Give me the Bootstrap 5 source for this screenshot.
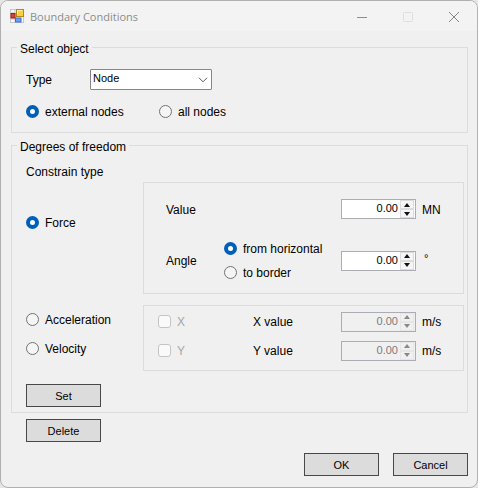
<!DOCTYPE html>
<html lang="en">
<head>
<meta charset="utf-8">
<meta name="viewport" content="width=device-width, initial-scale=1">
<title>Boundary Conditions</title>
<link href="https://cdn.jsdelivr.net/npm/bootstrap@5.3.0/dist/css/bootstrap.min.css" rel="stylesheet">
<style>
body { font-family: "Liberation Sans", Arial, sans-serif; font-size: 12px; line-height: 15px; color: #000; background: #e6e6e6; }
.dialog-window { background: #f0f0f0; border: 1px solid #b0b0b0; border-radius: 8px; overflow: hidden; }
.title-bar { height: 30px; background: #f3f3f3; padding-left: 9px; color: #8c8c8c; font-family: "Open Sans", "Noto Sans", sans-serif; }
.title-bar h1 { font-size: 11px; line-height: 16px; padding-left: 6px; padding-top: 1px; }
.caption-btn { width: 46px; height: 30px; border: 0; background: none; padding: 0; }
.dialog-body { padding: 7px 9px 11px 10px; }
.group-box { border: 1px solid #dcdcdc; padding: 0 3px 5px 14px; margin-bottom: 3px; }
.group-box > legend { font-size: 12px; line-height: 13px; padding: 5px 3px 0 3px; margin-left: -9px; }
.field-label, .unit { padding-top: 2px; }
.type-row { padding-top: 13px; }
.type-row .field-label { width: 64px; }
.type-select { width: 122px; height: 21px; border: 1px solid #868686; border-radius: 1px; font-size: 11px; line-height: 13px; padding: 0 20px 2px 2px; color: #000;
  background: #fff url("data:image/svg+xml,%3Csvg xmlns='http://www.w3.org/2000/svg' viewBox='0 0 10 6'%3E%3Cpath d='M1 .8l4 4 4-4' fill='none' stroke='%23555'/%3E%3C/svg%3E") no-repeat right 3px center / 10px 6px; }
.scope-row { padding: 14px 0 8px; }
.scope-row .choice { width: 133px; }
.choice { display: flex; align-items: center; gap: 6px; min-height: 15px; }
.choice input { flex: none; width: 13px; height: 13px; margin: 0; background: #f5f5f5; border: 1px solid #717171; }
.choice input[type=radio]:checked { border: 4px solid #005fb8; background: #fff; }
.choice label { padding-top: 2px; line-height: 13px; }
.choice input[type=checkbox] { border-color: #c4c4c4; border-radius: 3px; background: #fafafa; opacity: 1; }
.choice input:disabled + label { color: #a6a6a6; opacity: 1; }
.freedom-grid { display: grid; grid-template-columns: 117px 1fr; }
.constrain-title { height: 28px; padding-top: 11px; }
.force-cell { padding-top: 33px; }
.panel-box { border: 1px solid #dcdcdc; }
.force-panel { padding: 16px 0 13px 22px; margin-bottom: 11px; }
.force-panel .caption { width: 58px; }
.value-row { margin-bottom: 22px; }
.angle-choices { gap: 9px; }
.rate-row { height: 29px; }
.rate-panel { padding: 1px 0 5px 14px; }
.rate-panel .choice { width: 95px; }
.spin-side { width: 122px; gap: 6px; }
.degree-unit { padding-bottom: 4px; padding-left: 2px; font-size: 11px; }
.spin { width: 75px; height: 20px; border: 1px solid #abadb3; background: #fff; }
.spin input { flex: 1; min-width: 0; border: 0; padding: 0 2px 2px 0; background: none; text-align: right; font-size: 11px; line-height: 14px; color: #000; }
.spin-buttons { width: 15px; padding-right: 1px; }
.spin-buttons button { flex: 1; border: 1px solid #dcdcdc; background: #f5f5f5; padding: 0; display: flex; align-items: center; justify-content: center; color: #111; }
.spin.is-off { background: #f0f0f0; }
.spin.is-off input { color: #7b7b7b; }
.spin.is-off button { background: #f0f0f0; border-color: #e6e6e6; color: #888; }
.push-btn { width: 75px; height: 23px; border: 1px solid #484848; border-radius: 0; background: #dcdcdc; font-size: 11px; line-height: 13px; padding: 1px 0 0; color: #000; }
.push-btn:hover { background: #e6e6e6; border-color: #484848; }
.set-row { padding-top: 13px; }
.delete-row { padding: 3px 0 0 15px; }
.footer-row { padding-top: 11px; gap: 14px; }
</style>
</head>
<body>
<svg class="d-none" xmlns="http://www.w3.org/2000/svg">
  <symbol id="up" viewBox="0 0 6 4"><path d="M0 4L3 0L6 4Z" fill="currentColor"/></symbol>
  <symbol id="down" viewBox="0 0 6 4"><path d="M0 0L3 4L6 0Z" fill="currentColor"/></symbol>
</svg>
<main class="dialog-window">
  <header class="title-bar d-flex align-items-center">
    <svg width="14" height="14" viewBox="0 0 14 14" aria-hidden="true">
      <rect x=".5" y=".5" width="13" height="13" fill="#f8f8f8" stroke="#c8c8c8"/>
      <path d="M5 0V14M0 4H5M0 10H5" stroke="#c8c8c8"/>
      <rect x="1" y="4.500" width="4" height="4.500" fill="#d2483a" stroke="#96201a"/>
      <rect x="6.500" y=".5" width="7" height="7" fill="#fccf45" stroke="#b5851f"/>
      <path d="M7.500 5V1.500H12" fill="none" stroke="#fff0b0"/>
      <rect x="5.500" y="9" width="5.500" height="4" fill="#6ba3f5" stroke="#3a70c4"/>
    </svg>
    <h1 class="fw-normal mb-0 me-auto">Boundary Conditions</h1>
    <button class="caption-btn" type="button" aria-label="Minimize"><svg width="10" height="10" viewBox="0 0 10 10"><path d="M0 5.500H10" stroke="#8e8e8e"/></svg></button>
    <button class="caption-btn" type="button" aria-label="Maximize" disabled><svg width="10" height="10" viewBox="0 0 10 10"><rect x=".5" y=".5" width="9" height="9" rx="1" fill="none" stroke="#dedede"/></svg></button>
    <button class="caption-btn" type="button" aria-label="Close"><svg width="10" height="10" viewBox="0 0 10 10"><path d="M0 0L10 10M10 0L0 10" stroke="#858585"/></svg></button>
  </header>
  <form class="dialog-body">
    <fieldset class="group-box">
      <legend class="float-none w-auto mb-0">Select object</legend>
      <div class="type-row d-flex align-items-center">
        <label class="field-label" for="type">Type</label>
        <select class="form-select type-select" id="type"><option>Node</option></select>
      </div>
      <div class="scope-row d-flex">
        <div class="choice"><input class="form-check-input" type="radio" name="scope" id="external" checked><label for="external">external nodes</label></div>
        <div class="choice"><input class="form-check-input" type="radio" name="scope" id="all"><label for="all">all nodes</label></div>
      </div>
    </fieldset>
    <fieldset class="group-box">
      <legend class="float-none w-auto mb-0">Degrees of freedom</legend>
      <div class="constrain-title">Constrain type</div>
      <div class="freedom-grid">
        <div class="force-cell">
          <div class="choice"><input class="form-check-input" type="radio" name="kind" id="force" checked><label for="force">Force</label></div>
        </div>
        <div class="panel-box force-panel">
          <div class="value-row d-flex align-items-center">
            <label class="field-label me-auto" for="value">Value</label>
            <div class="spin-side d-flex align-items-center">
              <div class="spin d-flex"><input type="text" inputmode="decimal" id="value" value="0.00"><div class="spin-buttons d-flex flex-column"><button type="button" aria-label="Increase value"><svg width="6" height="4"><use href="#up"/></svg></button><button type="button" aria-label="Decrease value"><svg width="6" height="4"><use href="#down"/></svg></button></div></div>
              <span class="unit">MN</span>
            </div>
          </div>
          <div class="d-flex align-items-center">
            <label class="field-label caption" for="angle">Angle</label>
            <div class="angle-choices d-flex flex-column me-auto">
              <div class="choice"><input class="form-check-input" type="radio" name="ref" id="horizontal" checked><label for="horizontal">from horizontal</label></div>
              <div class="choice"><input class="form-check-input" type="radio" name="ref" id="border"><label for="border">to border</label></div>
            </div>
            <div class="spin-side d-flex align-items-center">
              <div class="spin d-flex"><input type="text" inputmode="decimal" id="angle" value="0.00"><div class="spin-buttons d-flex flex-column"><button type="button" aria-label="Increase angle"><svg width="6" height="4"><use href="#up"/></svg></button><button type="button" aria-label="Decrease angle"><svg width="6" height="4"><use href="#down"/></svg></button></div></div>
              <span class="degree-unit">°</span>
            </div>
          </div>
        </div>
        <div>
          <div class="rate-row choice"><input class="form-check-input" type="radio" name="kind" id="acceleration"><label for="acceleration">Acceleration</label></div>
          <div class="rate-row choice"><input class="form-check-input" type="radio" name="kind" id="velocity"><label for="velocity">Velocity</label></div>
        </div>
        <div class="panel-box rate-panel">
          <div class="rate-row d-flex align-items-center">
            <div class="choice"><input class="form-check-input" type="checkbox" id="x-on" disabled><label for="x-on">X</label></div>
            <label class="field-label me-auto" for="x-value">X value</label>
            <div class="spin-side d-flex align-items-center">
              <div class="spin is-off d-flex"><input type="text" id="x-value" value="0.00" disabled><div class="spin-buttons d-flex flex-column"><button type="button" aria-label="Increase X" disabled><svg width="6" height="4"><use href="#up"/></svg></button><button type="button" aria-label="Decrease X" disabled><svg width="6" height="4"><use href="#down"/></svg></button></div></div>
              <span class="unit">m/s</span>
            </div>
          </div>
          <div class="rate-row d-flex align-items-center">
            <div class="choice"><input class="form-check-input" type="checkbox" id="y-on" disabled><label for="y-on">Y</label></div>
            <label class="field-label me-auto" for="y-value">Y value</label>
            <div class="spin-side d-flex align-items-center">
              <div class="spin is-off d-flex"><input type="text" id="y-value" value="0.00" disabled><div class="spin-buttons d-flex flex-column"><button type="button" aria-label="Increase Y" disabled><svg width="6" height="4"><use href="#up"/></svg></button><button type="button" aria-label="Decrease Y" disabled><svg width="6" height="4"><use href="#down"/></svg></button></div></div>
              <span class="unit">m/s</span>
            </div>
          </div>
        </div>
      </div>
      <div class="set-row d-flex"><button class="btn push-btn" type="button">Set</button></div>
    </fieldset>
    <div class="delete-row d-flex"><button class="btn push-btn" type="button">Delete</button></div>
    <div class="footer-row d-flex justify-content-end">
      <button class="btn push-btn" type="button">OK</button>
      <button class="btn push-btn" type="button">Cancel</button>
    </div>
  </form>
</main>
<script src="https://cdn.jsdelivr.net/npm/bootstrap@5.3.0/dist/js/bootstrap.bundle.min.js"></script>
</body>
</html>
